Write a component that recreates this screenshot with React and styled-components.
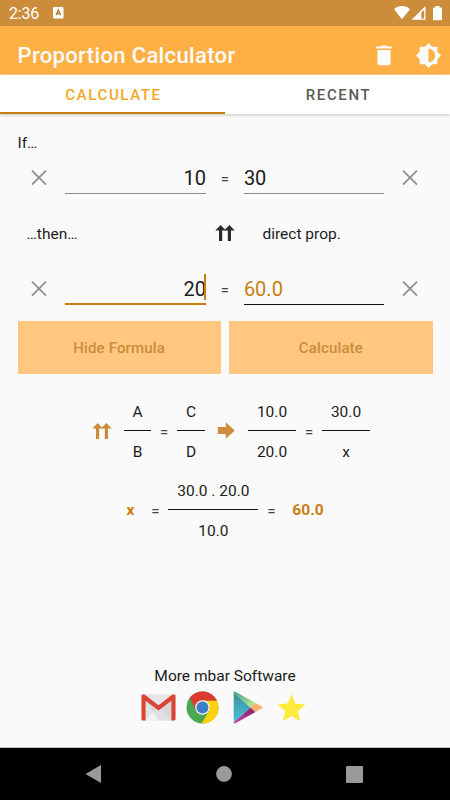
import { useState } from "react";
import styled, { createGlobalStyle, ThemeProvider } from "styled-components";

const theme = {
  colors: {
    status: "#cb8d3a",
    bar: "#ffb045",
    button: "#ffc780",
    accent: "#c77f12",
    tab: "#f5a623",
    page: "#fafafa",
    text: "#1c1c1c",
    icon: "#919191",
  },
};

const StatusIcons = () => (
  <svg width="50" height="16" viewBox="0 0 50 16" fill="#fff">
    <path d="M0 4.200C2.200 2.200 5 1.100 8 1.100s5.800 1.100 8 3.100L8 14.300z" />
    <path d="M17.600 14.800L31.500 1v13.800zM27.300 7.600v5.900h2.900V4.700z" fillRule="evenodd" />
    <path d="M41.500 2.500V1h4v1.500h1.600c.5 0 .9.400.9.900v11c0 .5-.4.900-.9.900h-7.200c-.5 0-.9-.4-.9-.9v-11c0-.5.4-.9.9-.9z" />
  </svg>
);

const KeyboardIcon = () => (
  <svg width="11" height="12" viewBox="0 0 11 12">
    <rect width="10.500" height="11.500" rx="1" fill="#fff" />
    <path
      d="M3 8.300L5.300 2.800 7.600 8.300M3.800 6.600h3"
      fill="none"
      stroke="#a8752f"
      strokeWidth="1.200"
    />
  </svg>
);

const TrashIcon = () => (
  <svg width="16" height="21" viewBox="0 0 16 21" fill="#fafafa">
    <path d="M1.400 5h13.200v13.200c0 1.100-.9 2-2 2H3.400c-1.100 0-2-.9-2-2zM.2 1.500h4.300l1-1.100h4.800l1 1.100h4.300v2H.2z" />
  </svg>
);

const BrightnessIcon = () => (
  <svg width="25" height="25" viewBox="0.700 0.700 22.600 22.600" fill="#fafafa">
    <path d="M20 15.310L23.310 12 20 8.690V4h-4.690L12 .690 8.690 4H4v4.690L.690 12 4 15.310V20h4.690L12 23.310 15.310 20H20v-4.690zM12 18V6c3.310 0 6 2.690 6 6s-2.690 6-6 6z" />
  </svg>
);

const CloseIcon = () => (
  <svg width="16" height="16" viewBox="0 0 16 16">
    <path
      d="M1 .7l14 14M15 .7L1 14.700"
      stroke="#919191"
      strokeWidth="1.900"
      fill="none"
    />
  </svg>
);

const DoubleArrow = ({ color }) => (
  <svg width="20" height="16" viewBox="0 0 20 16" fill={color}>
    <path d="M5.600 0l5.300 5.400H7.200V16H4V5.400H.3z" />
    <path d="M14.400 0l5.300 5.400H16V16h-3.200V5.400H9.100z" />
  </svg>
);

const RightArrow = () => (
  <svg width="19" height="17" viewBox="0 0 19 17" fill="#cb8d3a">
    <path d="M.8 5h8V.3l8.900 8.200-8.900 8.200V12h-8z" />
  </svg>
);

const GmailIcon = () => (
  <svg width="35" height="27" viewBox="0 0 35 27">
    <rect x=".5" y=".5" width="34" height="26" rx="1.500" fill="#e2e2e2" />
    <path d="M4 26.500L17.500 13 31 26.500z" fill="#f2f2f2" />
    <path d="M4 5l13.500 21.500H31V5L17.500 16z" fill="#d0d0d0" opacity=".55" />
    <path d="M3 .5h29L17.500 12z" fill="#e6e6e6" />
    <path
      d="M.5 2C.5 1 1.200.5 2 .5h1.500l14 10.700L31.500.5H33c.9 0 1.500.6 1.500 1.500v23c0 .9-.6 1.500-1.500 1.500h-2.600V6.800L17.500 16.500 4.600 6.800v19.700H2c-.9 0-1.500-.6-1.500-1.500z"
      fill="#dc4337"
    />
  </svg>
);

const ChromeIcon = () => (
  <svg width="33" height="33" viewBox="0 0 33 33">
    <circle cx="16.500" cy="16.500" r="16" fill="#4aa753" />
    <path
      d="M3.800 6.800A16 16 0 0 1 31 9.700H16.500L10 19.500z"
      fill="#dc3a2f"
    />
    <path
      d="M31 9.700A16 16 0 0 1 15.500 32.500L22.900 20.200 16.500 9.700z"
      fill="#fdd10d"
    />
    <circle cx="16.500" cy="16.500" r="7.300" fill="#f4f4f4" />
    <circle cx="16.500" cy="16.500" r="6" fill="#3f7fca" />
  </svg>
);

const PlayIcon = () => (
  <svg width="31" height="33" viewBox="0 0 31 33">
    <defs>
      <linearGradient id="teal" x1="0" y1="0" x2="0" y2="1">
        <stop offset="0" stopColor="#3f8f98" />
        <stop offset="1" stopColor="#45c2e0" />
      </linearGradient>
      <linearGradient id="green" x1="0" y1="0" x2="1" y2="1">
        <stop offset="0" stopColor="#3fa08a" />
        <stop offset="1" stopColor="#c8ee96" />
      </linearGradient>
      <linearGradient id="plum" x1="0" y1="1" x2="1" y2="0">
        <stop offset="0" stopColor="#cf3f9a" />
        <stop offset="1" stopColor="#7c2468" />
      </linearGradient>
    </defs>
    <path d="M.7 1.500v30L17.500 16.500z" fill="url(#teal)" />
    <path d="M.7 1.500C.7.400 1.500.2 2.400.7L22.500 12l-5 4.500z" fill="url(#green)" />
    <path d="M.7 31.500c0 1 .8 1.300 1.700.8L22.500 21l-5-4.500z" fill="url(#plum)" />
    <path d="M22.500 12l7.700 4.500L22.500 21l-5-4.500z" fill="#f8b16c" />
  </svg>
);

const StarIcon = () => (
  <svg width="29" height="28" viewBox="0 0 29 28">
    <path
      d="M14.500.3l3.900 9.300 10.200.9-7.800 6.600 2.400 10.200-8.700-5.400-8.700 5.400 2.400-10.200L.4 10.500l10.200-.9z"
      fill="#ffeb3b"
    />
  </svg>
);

const Fraction = ({ top, bottom, width }) => (
  <FractionBox $width={width}>
    <span>{top}</span>
    <hr />
    <span>{bottom}</span>
  </FractionBox>
);

const App = () => {
  const [tab, setTab] = useState("CALCULATE");

  return (
    <ThemeProvider theme={theme}>
      <GlobalStyle />
      <Screen>
        <StatusBar>
          <span>2:36</span>
          <KeyboardIcon />
          <StatusRight>
            <StatusIcons />
          </StatusRight>
        </StatusBar>
        <AppBar>
          <h1>Proportion Calculator</h1>
          <TrashIcon />
          <BrightnessIcon />
        </AppBar>
        <Tabs>
          {["CALCULATE", "RECENT"].map((name) => (
            <Tab
              key={name}
              type="button"
              $active={tab === name}
              onClick={() => setTab(name)}
            >
              {name}
            </Tab>
          ))}
        </Tabs>

        <Content>
          <Label>If…</Label>
          <Row>
            <CloseIcon />
            <Field $align="right">10</Field>
            <Equals>=</Equals>
            <Field>30</Field>
            <CloseIcon />
          </Row>
          <ThenRow>
            <span>…then…</span>
            <DoubleArrow color="#2b2b2b" />
            <span>direct prop.</span>
          </ThenRow>
          <Row>
            <CloseIcon />
            <Field $align="right" $focused>
              20
              <Cursor />
            </Field>
            <Equals>=</Equals>
            <Field $result>60.0</Field>
            <CloseIcon />
          </Row>
          <ButtonRow>
            <ActionButton type="button">Hide Formula</ActionButton>
            <ActionButton type="button">Calculate</ActionButton>
          </ButtonRow>

          <FormulaRow>
            <DoubleArrow color="#cb8d3a" />
            <Fraction top="A" bottom="B" width={27} />
            <Equals>=</Equals>
            <Fraction top="C" bottom="D" width={28} />
            <RightArrow />
            <Fraction top="10.0" bottom="20.0" width={48} />
            <Equals>=</Equals>
            <Fraction top="30.0" bottom="x" width={48} />
          </FormulaRow>
          <ResultRow>
            <Strong>x</Strong>
            <Equals>=</Equals>
            <Fraction top="30.0 . 20.0" bottom="10.0" width={90} />
            <Equals>=</Equals>
            <Strong>60.0</Strong>
          </ResultRow>
        </Content>

        <Footer>
          <span>More mbar Software</span>
          <Links>
            <GmailIcon />
            <ChromeIcon />
            <PlayIcon />
            <StarIcon />
          </Links>
        </Footer>
        <NavBar>
          <svg width="17" height="18" viewBox="0 0 17 18" fill="#999">
            <path d="M.5 9L15.500.3c.3-.1.500 0 .5.300v16.800c0 .3-.2.400-.5.300z" />
          </svg>
          <svg width="16" height="16" viewBox="0 0 16 16" fill="#999">
            <circle cx="8" cy="8" r="7.900" />
          </svg>
          <svg width="17" height="17" viewBox="0 0 17 17" fill="#999">
            <rect width="17" height="17" rx="1" />
          </svg>
        </NavBar>
      </Screen>
    </ThemeProvider>
  );
};

export default App;

const GlobalStyle = createGlobalStyle`
  * {
    box-sizing: border-box;
  }

  body {
    margin: 0;
    font-family: Roboto, "Liberation Sans", sans-serif;
  }

  svg {
    display: block;
    flex-shrink: 0;
  }
`;

const Screen = styled.main`
  display: flex;
  flex-direction: column;
  width: 450px;
  height: 800px;
  overflow: hidden;
  background-color: ${({ theme }) => theme.colors.page};
  color: ${({ theme }) => theme.colors.text};
  font-size: 15.500px;
`;

const StatusBar = styled.div`
  display: flex;
  align-items: center;
  gap: 14px;
  height: 26px;
  padding: 0 7px 0 9px;
  background-color: ${({ theme }) => theme.colors.status};
  color: #fff;
  font-size: 16px;
  letter-spacing: -0.2px;

  & > span {
    padding-top: 1px;
  }
`;

const StatusRight = styled.div`
  margin-left: auto;
  margin-right: -1px;
`;

const AppBar = styled.header`
  display: flex;
  align-items: center;
  height: 49px;
  padding: 10px 9.500px 0 17.500px;
  border-bottom: 1px solid #ffcf8f;
  background-color: ${({ theme }) => theme.colors.bar};

  & > h1 {
    flex: 1;
    margin: 0;
    color: #fafafa;
    font-size: 22px;
    font-weight: 500;
    letter-spacing: 0.35px;
  }

  & > svg + svg {
    margin-left: 23.500px;
  }
`;

const Tabs = styled.nav`
  display: flex;
  height: 39px;
  flex-shrink: 0;
  background-color: #fff;
  box-shadow: 0 1px 3px rgba(0, 0, 0, 0.22);
`;

const Tab = styled.button`
  flex: 1;
  padding: 2px 0 0 2px;
  border: none;
  border-bottom: 2px solid
    ${({ $active, theme }) => ($active ? theme.colors.accent : "transparent")};
  background: none;
  color: ${({ $active, theme }) => ($active ? theme.colors.tab : "#5a5a5a")};
  font-family: inherit;
  font-size: 15px;
  font-weight: 500;
  letter-spacing: 1.600px;
`;

const Content = styled.section`
  flex: 1;
  padding: 19px 17.500px 0;
`;

const Label = styled.div`
  height: 20px;
  line-height: 20px;
`;

const Row = styled.div`
  display: grid;
  grid-template-columns: 34.600px 140.400px 38px 140.500px 34px;
  align-items: center;
  height: 50px;
  padding-left: 13.400px;

  & > svg:last-child {
    justify-self: end;
  }
`;

const Field = styled.div`
  position: relative;
  align-self: start;
  height: ${({ $focused }) => ($focused ? "41px" : "40.500px")};
  padding-top: 12.500px;
  border-bottom: ${({ $focused, $result, theme }) =>
    $focused
      ? `2px solid ${theme.colors.accent}`
      : `1px solid ${$result ? "#111" : "#8a8a8a"}`};
  color: ${({ $result, theme }) =>
    $result ? theme.colors.accent : theme.colors.text};
  font-size: 20px;
  line-height: 25px;
  text-align: ${({ $align }) => $align || "left"};
`;

const Cursor = styled.i`
  position: absolute;
  right: 0;
  top: 10px;
  width: 2px;
  height: 26px;
  background-color: ${({ theme }) => theme.colors.accent};
`;

const Equals = styled.span`
  padding-top: 1px;
  color: #444;
  font-size: 15px;
  text-align: center;
`;

const ThenRow = styled.div`
  display: grid;
  grid-template-columns: 188px 48px 1fr;
  align-items: center;
  height: 61px;
  padding-left: 9px;

  & > svg {
    margin-top: -2px;
  }
`;

const ButtonRow = styled.div`
  display: grid;
  grid-template-columns: 1fr 1fr;
  gap: 8.500px;
  margin-top: 7px;
`;

const ActionButton = styled.button`
  height: 53px;
  border: none;
  background-color: ${({ theme }) => theme.colors.button};
  color: ${({ theme }) => theme.colors.status};
  font-family: inherit;
  font-size: 15px;
  font-weight: 500;
  letter-spacing: 0.15px;
`;

const FormulaRow = styled.div`
  display: flex;
  align-items: center;
  justify-content: center;
  gap: 12px;
  height: 60px;
  margin-top: 27px;
  padding-left: 12px;

  & > svg {
    margin-top: -1px;
  }

  & > ${Equals} {
    width: 2px;
    display: flex;
    justify-content: center;
  }
`;

const ResultRow = styled(FormulaRow)`
  gap: 12px;
  margin-top: 19px;
  padding-left: 0;

  & > strong:first-child {
    margin-right: 8px;
  }

  & > strong:last-child {
    margin-left: 8px;
  }
`;

const FractionBox = styled.div`
  display: flex;
  flex-direction: column;
  width: ${({ $width }) => $width}px;
  text-align: center;
  line-height: 20px;
  white-space: nowrap;

  & > span {
    padding-top: 1px;
    margin-bottom: -1px;
  }

  & > hr {
    width: 100%;
    height: 1px;
    margin: 9px 0 10px;
    border: none;
    background-color: #111;
  }
`;

const Strong = styled.strong`
  color: ${({ theme }) => theme.colors.accent};
  font-weight: 700;
`;

const Footer = styled.footer`
  display: flex;
  flex-direction: column;
  align-items: center;
  height: 82px;
  padding-top: 1px;
  border-bottom: 1px solid #c4c4c4;
`;

const Links = styled.div`
  display: flex;
  align-items: center;
  gap: 13.500px;
  margin-top: 6px;
  padding-right: 3px;

  & > svg:first-child {
    margin-right: -3.500px;
  }
`;

const NavBar = styled.nav`
  display: flex;
  align-items: center;
  justify-content: space-between;
  height: 52px;
  padding: 0 87px 0 85px;
  background-color: #000;
`;
